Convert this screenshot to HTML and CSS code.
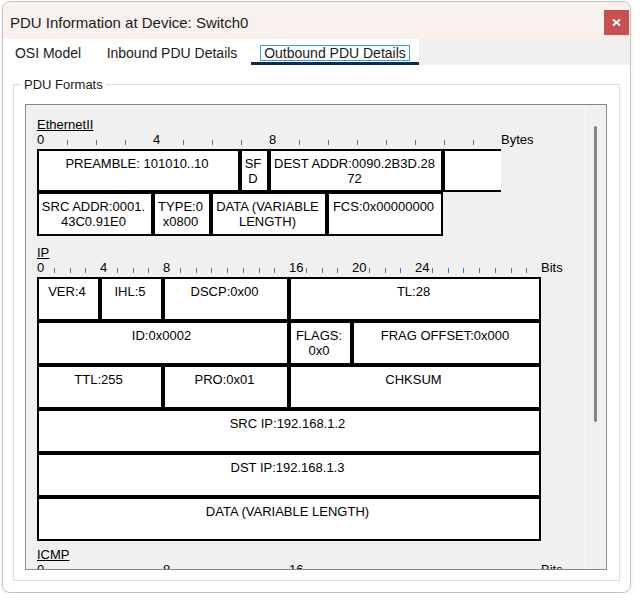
FILE: index.html
```html
<!DOCTYPE html>
<html lang="en">
<head>
<meta charset="utf-8">
<title>PDU Information at Device: Switch0</title>
<link rel="stylesheet" href="styles.css">
</head>
<body>
<div class="window">
  <div class="titlebar">
    <span class="title">PDU Information at Device: Switch0</span>
    <button class="close" type="button" aria-label="Close">
      <svg width="25" height="25" viewBox="0 0 25 25"><path d="M9 9.5 L16 15.5 M16 9.5 L9 15.5" stroke="#fff" stroke-width="1.9" fill="none"/></svg>
    </button>
  </div>
  <div class="tabs">
    <div class="tab tab-osi">OSI Model</div>
    <div class="tab tab-in">Inbound PDU Details</div>
    <div class="tab tab-out"><span class="focus">Outbound PDU Details</span></div>
  </div>
  <div class="content">
    <fieldset class="group">
      <legend>PDU Formats</legend>
      <div class="scroll">
        <div class="scroll-body">

          <section class="pdu">
            <div class="pdu-name">EthernetII</div>
            <div class="ruler">
              <span class="mark" style="left:0px">0</span>
              <span class="tick" style="left:30px"></span>
              <span class="tick" style="left:59px"></span>
              <span class="tick" style="left:88px"></span>
              <span class="mark" style="left:116px">4</span>
              <span class="tick" style="left:146px"></span>
              <span class="tick" style="left:175px"></span>
              <span class="tick" style="left:204px"></span>
              <span class="mark" style="left:232px">8</span>
              <span class="tick" style="left:262px"></span>
              <span class="tick" style="left:291px"></span>
              <span class="tick" style="left:320px"></span>
              <span class="tick" style="left:349px"></span>
              <span class="tick" style="left:378px"></span>
              <span class="tick" style="left:407px"></span>
              <span class="tick" style="left:436px"></span>
              <span class="mark" style="left:464px">Bytes</span>
            </div>
            <div class="fields eth-grid">
              <div class="f span-7">PREAMBLE: 101010..10</div>
              <div class="f span-1">SF<br>D</div>
              <div class="f span-6">DEST ADDR:0090.2B3D.28<br>72</div>
              <div class="f span-2 open"></div>
              <div class="f span-4">SRC ADDR:0001.<br>43C0.91E0</div>
              <div class="f span-2">TYPE:0<br>x0800</div>
              <div class="f span-4">DATA (VARIABLE<br>LENGTH)</div>
              <div class="f span-4">FCS:0x00000000</div>
            </div>
          </section>

          <section class="pdu">
            <div class="pdu-name">IP</div>
            <div class="ruler">
              <span class="mark" style="left:0px">0</span>
              <span class="tick" style="left:17px"></span>
              <span class="tick" style="left:33px"></span>
              <span class="tick" style="left:48px"></span>
              <span class="mark" style="left:63px">4</span>
              <span class="tick" style="left:80px"></span>
              <span class="tick" style="left:96px"></span>
              <span class="tick" style="left:111px"></span>
              <span class="mark" style="left:126px">8</span>
              <span class="tick" style="left:143px"></span>
              <span class="tick" style="left:159px"></span>
              <span class="tick" style="left:174px"></span>
              <span class="tick" style="left:190px"></span>
              <span class="tick" style="left:206px"></span>
              <span class="tick" style="left:222px"></span>
              <span class="tick" style="left:237px"></span>
              <span class="mark" style="left:252px">16</span>
              <span class="tick" style="left:269px"></span>
              <span class="tick" style="left:285px"></span>
              <span class="tick" style="left:300px"></span>
              <span class="mark" style="left:315px">20</span>
              <span class="tick" style="left:332px"></span>
              <span class="tick" style="left:348px"></span>
              <span class="tick" style="left:363px"></span>
              <span class="mark" style="left:378px">24</span>
              <span class="tick" style="left:395px"></span>
              <span class="tick" style="left:411px"></span>
              <span class="tick" style="left:426px"></span>
              <span class="tick" style="left:442px"></span>
              <span class="tick" style="left:458px"></span>
              <span class="tick" style="left:474px"></span>
              <span class="tick" style="left:489px"></span>
              <span class="mark" style="left:504px">Bits</span>
            </div>
            <div class="fields ip-grid">
              <div class="f span-4">VER:4</div>
              <div class="f span-4">IHL:5</div>
              <div class="f span-8">DSCP:0x00</div>
              <div class="f span-16">TL:28</div>
              <div class="f span-16">ID:0x0002</div>
              <div class="f span-4">FLAGS:<br>0x0</div>
              <div class="f span-12">FRAG OFFSET:0x000</div>
              <div class="f span-8">TTL:255</div>
              <div class="f span-8">PRO:0x01</div>
              <div class="f span-16">CHKSUM</div>
              <div class="f span-32">SRC IP:192.168.1.2</div>
              <div class="f span-32">DST IP:192.168.1.3</div>
              <div class="f span-32">DATA (VARIABLE LENGTH)</div>
            </div>
          </section>

          <section class="pdu pdu-last">
            <div class="pdu-name">ICMP</div>
            <div class="ruler">
              <span class="mark" style="left:0px">0</span>
              <span class="mark" style="left:126px">8</span>
              <span class="mark" style="left:252px">16</span>
              <span class="mark" style="left:504px">Bits</span>
            </div>
            <div class="fields ip-grid">
              <div class="f span-8">TYPE:0x08</div>
              <div class="f span-8">CODE:0x00</div>
              <div class="f span-16">CHECKSUM</div>
            </div>
          </section>

        </div>
        <div class="vscroll"><div class="thumb"></div></div>
      </div>
    </fieldset>
  </div>
</div>
</body>
</html>
```

FILE: styles.css
```css
* {
  box-sizing: border-box;
}

html,
body {
  margin: 0;
  padding: 0;
  background: #ffffff;
}

body {
  font-family: "Liberation Sans", Arial, sans-serif;
  color: #000;
}

.window {
  margin: 1px 0 0 2px;
  width: 629px;
  height: 592px;
  border: 1px solid #c4c4c4;
  border-radius: 8px;
  overflow: hidden;
  background: #fff;
  display: flex;
  flex-direction: column;
  box-shadow: 0 2px 5px rgba(0, 0, 0, 0.07);
}

.titlebar {
  flex: none;
  height: 37px;
  background: #f9f1ed;
  display: flex;
  align-items: flex-start;
  justify-content: space-between;
}

.title {
  margin: 12px 0 0 7px;
  font-size: 15px;
  line-height: 17px;
  color: #1c1c1c;
}

.close {
  width: 25px;
  height: 25px;
  margin: 8px 1px 0 0;
  padding: 0;
  border: 0;
  background: #c75050;
  display: flex;
  align-items: center;
  justify-content: center;
}

.close svg {
  display: block;
}

.tabs {
  flex: none;
  height: 26px;
  display: flex;
  background: #f0f0f0;
}

.tab {
  background: #fff;
  display: flex;
  align-items: center;
  justify-content: center;
  padding-top: 1px;
  font-size: 14px;
  color: #1a1a1a;
}

.tab-osi {
  width: 90px;
}

.tab-in {
  width: 158px;
}

.tab-out {
  width: 168px;
  box-shadow: inset 0 -3px 0 #0c2b53;
}

.focus {
  border: 1px solid #2aa5dd;
  padding: 0 3px;
  line-height: 14px;
}

.content {
  flex: 1;
  padding: 0 10px;
}

.group {
  margin: 11.5px 0 0;
  padding: 12.5px 12px 10px 11px;
  border: 1px solid #dcdcdc;
  min-width: 0;
}

.group legend {
  font-size: 13px;
  line-height: 15px;
  padding: 0 3px;
  margin-left: -4px;
  color: #1a1a1a;
}

.scroll {
  height: 466px;
  border: 1px solid #828790;
  background: #f0f0f0;
  display: flex;
  overflow: hidden;
}

.scroll-body {
  flex: 1;
  min-width: 0;
  overflow: hidden;
  padding: 12px 0 0 11px;
}

.vscroll {
  flex: none;
  width: 21px;
  border-left: 1px solid #fbfbfb;
  padding: 21px 0 0 8px;
}

.thumb {
  width: 3px;
  height: 296px;
  background: #858585;
  border-radius: 2px;
}

.pdu + .pdu {
  margin-top: 9px;
}

.pdu + .pdu-last {
  margin-top: 6px;
}

.pdu-name {
  font-size: 13px;
  line-height: 15px;
  text-decoration: underline;
  width: fit-content;
}

.ruler {
  position: relative;
  height: 17px;
  font-size: 13px;
  line-height: 15px;
}

.mark {
  position: absolute;
  top: 0;
}

.tick {
  position: absolute;
  top: 8px;
  width: 1px;
  height: 5px;
  background: #3d7cc9;
}

.fields {
  display: grid;
}

.eth-grid {
  grid-template-columns: repeat(16, 29px);
  grid-template-rows: 43px 44px;
}

.ip-grid {
  grid-template-columns: repeat(32, 15.75px);
  grid-auto-rows: 44px;
}

.f {
  border: 2px solid #000;
  background: #fff;
  padding: 5px 5px 0 2px;
  text-align: center;
  font-size: 13px;
  line-height: 15px;
  white-space: nowrap;
}

.open {
  border-right: 0;
}

.span-1 { grid-column: span 1; }
.span-2 { grid-column: span 2; }
.span-4 { grid-column: span 4; }
.span-6 { grid-column: span 6; }
.span-7 { grid-column: span 7; }
.span-8 { grid-column: span 8; }
.span-12 { grid-column: span 12; }
.span-16 { grid-column: span 16; }
.span-32 { grid-column: span 32; }
```
